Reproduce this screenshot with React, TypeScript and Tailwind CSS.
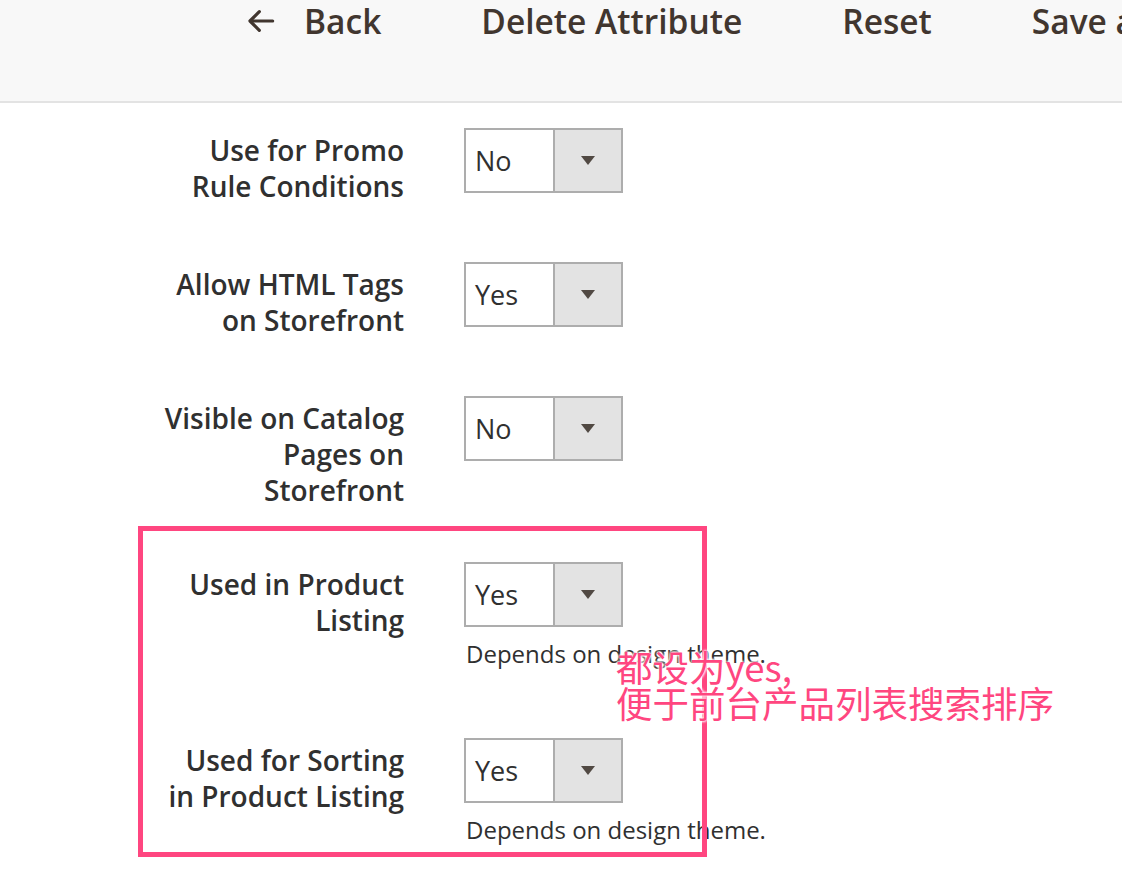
import React from "react";

const fields = [
  { label: ["Use for Promo", "Rule Conditions"], value: "No" },
  { label: ["Allow HTML Tags", "on Storefront"], value: "Yes" },
  { label: ["Visible on Catalog", "Pages on", "Storefront"], value: "No" },
  { label: ["Used in Product", "Listing"], value: "Yes", note: "Depends on design theme." },
  { label: ["Used for Sorting", "in Product Listing"], value: "Yes", note: "Depends on design theme." },
];

const gaps = ["", "mt-[58px]", "mt-[58px]", "mt-[54px]", "mt-[69px]"];

const Select = ({ value }: { value: string }) => (
  <div className="flex w-[159px] h-[65px] border-2 border-[#adadad] bg-white">
    <div className="flex-1 flex items-center pl-[9px] pt-[2px] text-[27px] text-[#303030]">{value}</div>
    <div className="w-[68px] flex items-center justify-center bg-[#e3e3e3] border-l-2 border-[#adadad]">
      <div className="w-0 h-0 border-l-[7px] border-r-[7px] border-t-[9px] border-l-transparent border-r-transparent border-t-[#514943]" />
    </div>
  </div>
);

const App = () => {
  return (
    <div className="relative w-[1122px] h-[882px] overflow-hidden bg-white font-['Open_Sans',sans-serif]">
      <div className="h-[103px] bg-[#f8f8f8] border-b-2 border-[#e3e3e3] flex items-start pl-[246px] pt-[1px] text-[33.5px] leading-[40px] font-semibold text-[#41362f] whitespace-nowrap overflow-hidden">
        <button className="flex items-center">
          <svg width="32" height="32" viewBox="0 0 24 24" fill="none" stroke="#41362f" strokeWidth="2.4" strokeLinecap="round" strokeLinejoin="round" className="mr-[26px]">
            <path d="M20 12H4" />
            <path d="M10 5l-7 7 7 7" />
          </svg>
          Back
        </button>
        <button className="ml-[100px]">Delete Attribute</button>
        <button className="ml-[100px]">Reset</button>
        <button className="ml-[100px]">Save attribute</button>
      </div>

      <div className="flex flex-col pt-[25px]">
        {fields.map((f, i) => (
          <div key={i} className={`flex ${gaps[i]}`}>
            <div className="w-[404px] text-right pt-[4px] text-[28px] leading-[36px] font-semibold text-[#303030]">
              {f.label.map((l) => (
                <div key={l}>{l}</div>
              ))}
            </div>
            <div className="ml-[60px]">
              <Select value={f.value} />
              {f.note && <div className="mt-[12px] ml-[2px] text-[24px] leading-[30px] text-[#303030]">{f.note}</div>}
            </div>
          </div>
        ))}
      </div>

      <div className="absolute left-[138px] top-[526px] w-[569px] h-[331px] border-[5px] border-[#ff4680]" />
      <div className="absolute left-[616px] top-[649px] text-[36.5px] leading-[36px] text-[#ff4680] font-['Noto_Sans_CJK_SC',sans-serif] [text-shadow:0_0_3px_#fff,0_0_3px_#fff,0_0_3px_#fff]">
        <div>都设为yes,</div>
        <div>便于前台产品列表搜索排序</div>
      </div>
    </div>
  );
};

export default App;
